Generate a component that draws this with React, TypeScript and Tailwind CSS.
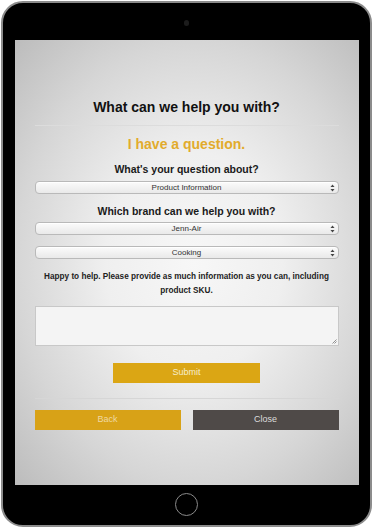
import React from 'react';

const SelectBox: React.FC<{ value: string }> = ({ value }) => (
    <div className="relative flex items-center justify-center h-[13px] w-full rounded-[4px] border border-[#b9b9b9] bg-[linear-gradient(#fbfbfb,#e9e9e9)] shadow-[inset_0_1px_0_#ffffff]">
        <span className="text-[8px] leading-none text-[#333]">{value}</span>
        <svg className="absolute right-[3px] top-[2px]" width="5" height="8" viewBox="0 0 5 8">
            <path d="M2.5 0.5 L4.5 3 L0.5 3 Z" fill="#444" />
            <path d="M2.5 7.5 L4.5 5 L0.5 5 Z" fill="#444" />
        </svg>
    </div>
);

export default function App() {
    return (
        <div className="w-[373px] h-[528px] bg-white p-[1px] font-['Liberation_Sans',Arial,sans-serif]">
            <div className="h-full w-full rounded-[22px] border-2 border-[#8c8c8c] bg-black flex flex-col items-center">
                <div className="h-[37px] w-full flex items-center justify-center">
                    <div className="w-[5px] h-[6px] rounded-full bg-[#1c1c1c] mt-[2px]" />
                </div>

                <div className="w-[344px] h-[445px] bg-[radial-gradient(ellipse_at_52%_50%,#f7f7f7_0%,#efefef_35%,#d6d6d6_70%,#bcbcbc_100%)] flex flex-col px-[20px] pt-[57px]">
                    <h1 className="text-[14px] leading-[20px] font-bold text-center text-[#111]">
                        What can we help you with?
                    </h1>
                    <div className="mt-[8px] border-t border-[#dcdcdc]" />

                    <h2 className="mt-[8px] text-[14px] leading-[20px] font-bold text-center text-[#e2ab2c]">
                        I have a question.
                    </h2>

                    <p className="mt-[7px] text-[10.5px] leading-[16px] font-bold text-center text-[#1a1a1a]">
                        What's your question about?
                    </p>
                    <div className="mt-[4px]">
                        <SelectBox value="Product Information" />
                    </div>

                    <p className="mt-[9px] text-[10.5px] leading-[16px] font-bold text-center text-[#1a1a1a]">
                        Which brand can we help you with?
                    </p>
                    <div className="mt-[3px]">
                        <SelectBox value="Jenn-Air" />
                    </div>
                    <div className="mt-[11px]">
                        <SelectBox value="Cooking" />
                    </div>

                    <p className="mt-[11px] px-[6px] text-[8.2px] leading-[14px] font-bold text-center text-[#222]">
                        Happy to help. Please provide as much information as you can, including product SKU.
                    </p>

                    <div className="relative mt-[8px] h-[40px] w-full border border-[#c8c8c8] bg-[#f4f4f4]">
                        <svg className="absolute right-[1px] bottom-[1px]" width="5" height="5" viewBox="0 0 5 5">
                            <path d="M4.5 0.5 L0.5 4.5 M4.5 2.5 L2.5 4.5" stroke="#777" strokeWidth="0.8" />
                        </svg>
                    </div>

                    <div className="mt-[17px] flex justify-center">
                        <button className="w-[147px] h-[20px] bg-[#dba614] text-[9px] text-[#f6edcc]">
                            Submit
                        </button>
                    </div>

                    <div className="mt-[15px] border-t border-[#d6d6d6]" />

                    <div className="mt-[11px] flex justify-between">
                        <button className="w-[146px] h-[20px] bg-[#d8a217] text-[9px] text-[#efd9a2]">
                            Back
                        </button>
                        <button className="w-[146px] h-[20px] bg-[#4f4a48] text-[9px] text-[#dcdcdc]">
                            Close
                        </button>
                    </div>
                </div>

                <div className="flex-1 w-full flex items-center justify-center">
                    <div className="w-[23px] h-[23px] rounded-full border border-[#8a8a8a] mb-[2px]" />
                </div>
            </div>
        </div>
    );
}
